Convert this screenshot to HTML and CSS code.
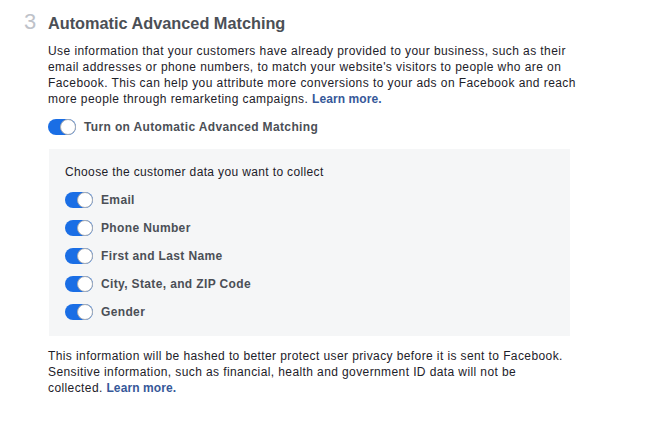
FILE: index.html
```html
<!DOCTYPE html>
<html>
<head>
<meta charset="utf-8">
<link rel="stylesheet" href="styles.css">
</head>
<body>
<div class="section">
  <div class="head">
    <span class="num">3</span>
    <h2 class="title">Automatic Advanced Matching</h2>
  </div>
  <div class="content">
    <p class="desc">Use information that your customers have already provided to your business, such as their email addresses or phone numbers, to match your website's visitors to people who are on Facebook. This can help you attribute more conversions to your ads on Facebook and reach more people through remarketing campaigns. <a class="link" href="#">Learn more.</a></p>
    <div class="row main-row"><span class="toggle"></span><span class="label">Turn on Automatic Advanced Matching</span></div>
    <div class="box">
      <div class="box-title">Choose the customer data you want to collect</div>
      <div class="list">
        <div class="row"><span class="toggle"></span><span class="label">Email</span></div>
        <div class="row"><span class="toggle"></span><span class="label">Phone Number</span></div>
        <div class="row"><span class="toggle"></span><span class="label">First and Last Name</span></div>
        <div class="row"><span class="toggle"></span><span class="label">City, State, and ZIP Code</span></div>
        <div class="row"><span class="toggle"></span><span class="label">Gender</span></div>
      </div>
    </div>
    <p class="note">This information will be hashed to better protect user privacy before it is sent to Facebook. Sensitive information, such as financial, health and government ID data will not be collected. <a class="link" href="#">Learn more.</a></p>
  </div>
</div>
</body>
</html>
```
FILE: styles.css
```css
html, body { margin: 0; padding: 0; background: #fff; }
body { font-family: "Liberation Sans", Arial, sans-serif; color: #1d2129; }
.section { padding: 10px 0 0 24px; width: 560px; }
.head { display: flex; align-items: baseline; height: 24px; }
.num { font-size: 22px; color: #bec2c9; width: 24px; font-weight: 400; line-height: 24px; }
.title { margin: 0; font-size: 16.3px; font-weight: 700; color: #4b4f56; line-height: 24px; }
.content { padding-left: 24px; }
.desc { margin: 9px 0 0 0; font-size: 12px; line-height: 16px; letter-spacing: 0.43px; color: #1d2129; width: 532px; }
.desc .link { letter-spacing: 0.1px; }
.link { color: #365899; font-weight: 700; text-decoration: none; }
.row { display: flex; align-items: center; height: 28px; }
.main-row { margin-top: 6px; }
.toggle { position: relative; width: 28px; height: 16px; border-radius: 8px; background: #1a6ee5; flex: none; margin-right: 8px; }
.toggle::after { content: ""; position: absolute; right: 0; top: 0; width: 14px; height: 14px; border-radius: 50%; background: #fff; border: 1px solid #a8acb3; }
.label { font-size: 12px; font-weight: 700; color: #4b4f56; letter-spacing: 0.36px; }
.box { margin-top: 8px; background: #f5f6f7; padding: 16px 16px 10px 16px; width: 489px; margin-left: 1px; }
.box-title { font-size: 12px; line-height: 14px; color: #1d2129; letter-spacing: 0.36px; }
.list { margin-top: 7px; }
.note { margin: 12px 0 0 0; font-size: 12px; line-height: 16px; color: #1d2129; letter-spacing: 0.4px; width: 520px; }
.note .link { letter-spacing: 0.1px; }
```
